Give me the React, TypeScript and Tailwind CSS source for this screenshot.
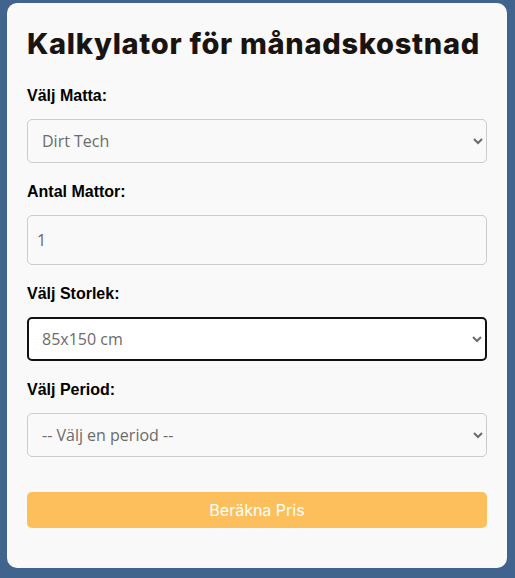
import React from 'react';

const labelCls = "block text-[16px] leading-[18px] font-bold text-black mb-[14px] font-['Liberation_Sans',Arial,sans-serif]";
const fieldBase =
  "block w-full rounded-[5px] text-[16px] text-[#6b6b6b] font-['Open_Sans',sans-serif] outline-none";
const fieldIdle = `${fieldBase} border border-[#cccccc] bg-[#f9f9f9]`;

export default function App() {
  return (
    <div className="min-h-[578px] w-full bg-[#41648e] pt-[3px] pl-[7px] pr-[8px] pb-[10px]">
      <div className="w-[500px] rounded-[10px] bg-[#f9f9f9] px-[20px] pt-[21px] pb-[40px]">
        <h1 className="mb-[23px] text-[29px] leading-[40px] font-extrabold text-[#1a1411] font-['Inter',sans-serif] tracking-[0.7px]">
          Kalkylator för månadskostnad
        </h1>

        <label className={labelCls}>Välj Matta:</label>
        <select className={`${fieldIdle} h-[44px] mb-[20px] px-[10px]`} defaultValue="dirt">
          <option value="dirt">Dirt Tech</option>
        </select>

        <label className={labelCls}>Antal Mattor:</label>
        <input
          type="number"
          defaultValue={1}
          className={`${fieldIdle} h-[50px] mb-[20px] px-[9px] text-[#6f655d]`}
        />

        <label className={labelCls}>Välj Storlek:</label>
        <select
          className={`${fieldBase} h-[44px] mb-[20px] border-2 border-[#111111] bg-white px-[9px]`}
          defaultValue="85"
        >
          <option value="85">85x150 cm</option>
        </select>

        <label className={labelCls}>Välj Period:</label>
        <select className={`${fieldIdle} h-[44px] mb-[35px] px-[10px]`} defaultValue="">
          <option value="">-- Välj en period --</option>
        </select>

        <button className="block h-[36px] w-full rounded-[5px] bg-[#fdbf5c] text-[16px] text-white font-['Inter',sans-serif]">
          Beräkna Pris
        </button>
      </div>
    </div>
  );
}
